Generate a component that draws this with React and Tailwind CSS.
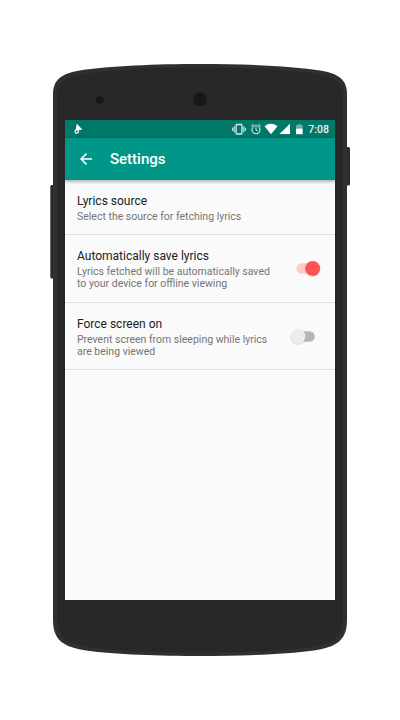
import React from "react";

function PhoneBody() {
  return (
    <svg className="absolute inset-0" width="400" height="720" viewBox="0 0 400 720" aria-hidden="true">
      <rect x="50.3" y="185" width="6" height="93.5" rx="1.5" fill="#2b2b2b" />
      <rect x="344" y="147" width="6" height="38.5" rx="1.5" fill="#2b2b2b" />
      <path
        d="M53 94C53 80 61 74 78 70.700C110 65.800 156 64 200 64C244 64 290 65.800 322 70.700C339 74 347 80 347 94V620C347 640 337 647 314 650.500C285 654.500 240 656 200 656C160 656 115 654.500 86 650.500C63 647 53 640 53 620Z"
        fill="#303030"
      />
      <path
        d="M57 96C57 84 64 77.500 82 74C114 69.500 157 67.500 200 67.500C243 67.500 286 69.500 318 74C336 77.500 343 84 343 96V618C343 635 334 643.500 312 647C284 651 240 652.500 200 652.500C160 652.500 116 651 88 647C66 643.500 57 635 57 618Z"
        fill="#282828"
      />
      <circle cx="99.800" cy="99.800" r="3.900" fill="#171717" />
      <circle cx="200" cy="99.300" r="6.900" fill="#171717" />
    </svg>
  );
}

function StatusBar() {
  return (
    <div className="flex h-[18px] shrink-0 items-center bg-[#00796b] text-white">
      <svg width="270" height="18" viewBox="0 0 270 18" fill="none">
        <path d="M11.800 3.800L17.300 9.400L13.800 10.200L10.600 9.800Z" fill="#fff" />
        <circle cx="11.700" cy="11.500" r="1.700" stroke="#fff" strokeWidth="1.200" />
        <g stroke="#d9ebe9">
          <rect x="171.100" y="4.500" width="5.800" height="9.500" rx=".8" strokeWidth="1.300" />
          <path d="M169.200 6.200V12.300M178.800 6.200V12.300" strokeWidth="1.100" />
          <path d="M167.600 7.700V10.800M180.400 7.700V10.800" strokeWidth="1" />
          <circle cx="191" cy="9.700" r="4" strokeWidth="1.100" />
          <path d="M191 7.300V9.900L192.900 11M185.900 6.300L188.600 4.200M196.100 6.300L193.400 4.200" strokeWidth="1" />
        </g>
        <path d="M199.500 6.200Q206 1.500 212.500 6.200L206 14.200Z" fill="#fff" />
        <path d="M225 3.700V14H214.500Z" fill="#fff" />
        <path d="M231 5H233V4H235.700V5H237.700V8.500H231Z" fill="#66afa6" />
        <path d="M231 8.500H237.700V14.200H231Z" fill="#fff" />
        <text x="243.300" y="13" fill="#e5f2f0" className="font-[Roboto,sans-serif] text-[10.500px] font-medium">7:08</text>
      </svg>
    </div>
  );
}

function Toolbar() {
  return (
    <div className="z-10 flex h-[42px] shrink-0 items-center bg-[#009688] pl-[15px] text-white shadow-[0_1px_4px_rgba(0,0,0,0.4)]">
      <svg width="12" height="12" viewBox="0 0 12 12" fill="none" stroke="currentColor" strokeWidth="1.500">
        <path d="M12 6H1.200M6.500 .6L1.100 6L6.500 11.400" />
      </svg>
      <h1 className="ml-[18px] text-[15px] leading-[20px] font-medium whitespace-nowrap">Settings</h1>
    </div>
  );
}

function Switch({ on }) {
  return (
    <svg className="shrink-0 overflow-visible" width="36" height="20" viewBox="0 0 36 20" aria-hidden="true">
      <rect x={on ? 6.500 : 4} y="5.200" width={on ? 20 : 20.800} height="10.500" rx="5.250" fill={on ? "#fccbcb" : "#b5b5b5"} />
      <circle cx={on ? 22.700 : 8.200} cy="11" r="7.800" fill="#000" opacity=".13" />
      <circle cx={on ? 22.700 : 8.200} cy="10.400" r="7.400" fill={on ? "#ff5252" : "#ececec"} />
    </svg>
  );
}

function Setting({ title, lines, toggle, on, className }) {
  return (
    <div className={"flex shrink-0 items-start border-b border-[#dfdfdf] pl-3 " + className}>
      <div className="w-[213px]">
        <h2 className="text-[12px] leading-[16px] text-[#212121] whitespace-nowrap">{title}</h2>
        <p className="mt-[1.500px] text-[10.500px] leading-[12.300px] text-[#757575] whitespace-nowrap">
          {lines.map((line) => (
            <span key={line} className="block">{line}</span>
          ))}
        </p>
      </div>
      {toggle && <div className="mt-[10px]"><Switch on={on} /></div>}
    </div>
  );
}

export default function App() {
  return (
    <div className="relative h-[720px] w-[400px] overflow-hidden bg-white font-[Roboto,sans-serif]">
      <PhoneBody />
      <main className="relative mt-[120px] ml-[65px] flex h-[480px] w-[270px] flex-col overflow-hidden bg-[#fafafa]">
        <StatusBar />
        <Toolbar />
        <Setting className="h-[55px] pt-[13px]" title="Lyrics source" lines={["Select the source for fetching lyrics"]} />
        <Setting
          className="h-[68px] pt-[13px]"
          title="Automatically save lyrics"
          lines={["Lyrics fetched will be automatically saved", "to your device for offline viewing"]}
          toggle
          on
        />
        <Setting
          className="h-[67px] pt-[13px]"
          title="Force screen on"
          lines={["Prevent screen from sleeping while lyrics", "are being viewed"]}
          toggle
        />
      </main>
    </div>
  );
}
